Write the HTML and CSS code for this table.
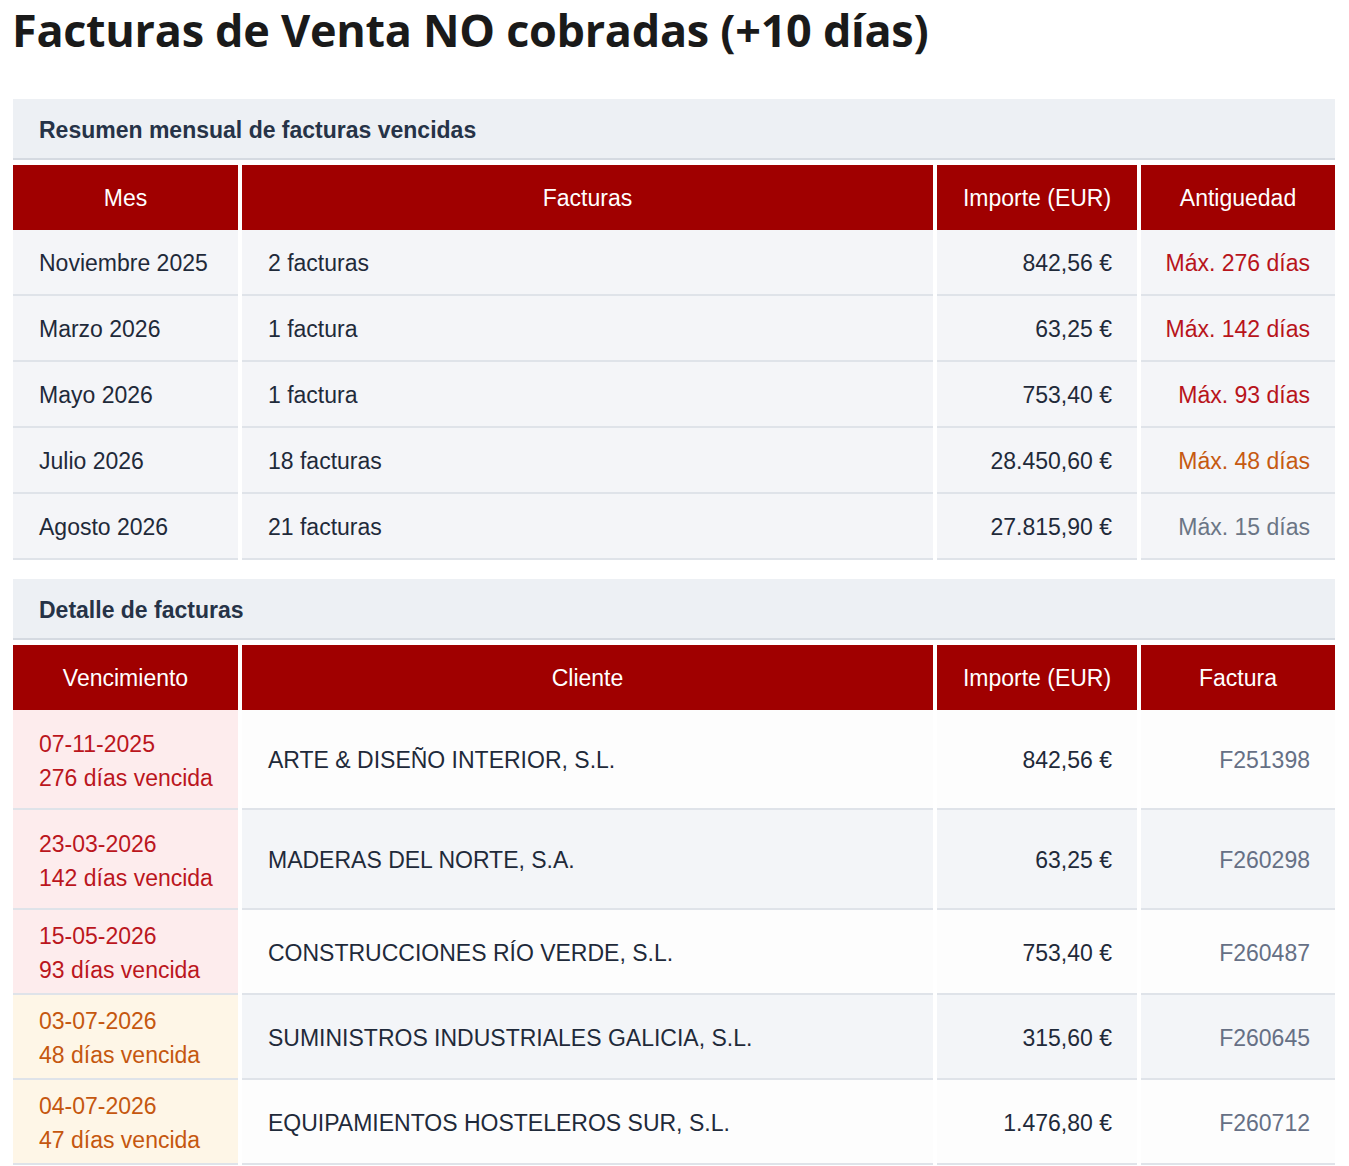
FILE: index.html
```html
<!DOCTYPE html>
<html lang="es">
<head>
<meta charset="utf-8">
<title>Facturas de Venta NO cobradas</title>
<link rel="stylesheet" href="styles.css">
</head>
<body>
<h1 class="page-title">Facturas de Venta NO cobradas (+10 días)</h1>

<section class="block">
  <h2 class="block-title">Resumen mensual de facturas vencidas</h2>
  <table class="grid summary">
    <colgroup>
      <col class="c1"><col class="c2"><col class="c3"><col class="c4">
    </colgroup>
    <thead>
      <tr><th>Mes</th><th>Facturas</th><th>Importe (EUR)</th><th>Antiguedad</th></tr>
    </thead>
    <tbody>
      <tr><td>Noviembre 2025</td><td>2 facturas</td><td class="num">842,56 €</td><td class="num age-red">Máx. 276 días</td></tr>
      <tr><td>Marzo 2026</td><td>1 factura</td><td class="num">63,25 €</td><td class="num age-red">Máx. 142 días</td></tr>
      <tr><td>Mayo 2026</td><td>1 factura</td><td class="num">753,40 €</td><td class="num age-red">Máx. 93 días</td></tr>
      <tr><td>Julio 2026</td><td>18 facturas</td><td class="num">28.450,60 €</td><td class="num age-orange">Máx. 48 días</td></tr>
      <tr><td>Agosto 2026</td><td>21 facturas</td><td class="num">27.815,90 €</td><td class="num age-gray">Máx. 15 días</td></tr>
    </tbody>
  </table>
</section>

<section class="block">
  <h2 class="block-title">Detalle de facturas</h2>
  <table class="grid detail">
    <colgroup>
      <col class="c1"><col class="c2"><col class="c3"><col class="c4">
    </colgroup>
    <thead>
      <tr><th>Vencimiento</th><th>Cliente</th><th>Importe (EUR)</th><th>Factura</th></tr>
    </thead>
    <tbody>
      <tr class="tall"><td class="due due-red">07-11-2025<br>276 días vencida</td><td>ARTE &amp; DISEÑO INTERIOR, S.L.</td><td class="num">842,56 €</td><td class="num inv">F251398</td></tr>
      <tr class="tall alt"><td class="due due-red">23-03-2026<br>142 días vencida</td><td>MADERAS DEL NORTE, S.A.</td><td class="num">63,25 €</td><td class="num inv">F260298</td></tr>
      <tr><td class="due due-red">15-05-2026<br>93 días vencida</td><td>CONSTRUCCIONES RÍO VERDE, S.L.</td><td class="num">753,40 €</td><td class="num inv">F260487</td></tr>
      <tr class="alt"><td class="due due-orange">03-07-2026<br>48 días vencida</td><td>SUMINISTROS INDUSTRIALES GALICIA, S.L.</td><td class="num">315,60 €</td><td class="num inv">F260645</td></tr>
      <tr><td class="due due-orange">04-07-2026<br>47 días vencida</td><td>EQUIPAMIENTOS HOSTELEROS SUR, S.L.</td><td class="num">1.476,80 €</td><td class="num inv">F260712</td></tr>
    </tbody>
  </table>
</section>
</body>
</html>
```

FILE: styles.css
```css
html, body {
  margin: 0;
  padding: 0;
  background: #ffffff;
}

body {
  padding: 0 14px 0 13px;
  font-family: "Liberation Sans", Arial, sans-serif;
  color: #1f2a3a;
}

.page-title {
  margin: 0 0 0 -1px;
  padding-top: 0;
  font-family: "Open Sans", "Liberation Sans", sans-serif;
  font-weight: 700;
  font-size: 45px;
  line-height: 60px;
  color: #1a1a1a;
  letter-spacing: -0.3px;
}

.block {
  margin-top: 39px;
}

.block + .block {
  margin-top: 19px;
}

.block-title {
  margin: 0;
  height: 61px;
  display: flex;
  align-items: center;
  padding: 3px 0 0 26px;
  box-sizing: border-box;
  background: #edf0f4;
  border-bottom: 2px solid #d5dae1;
  font-size: 23px;
  font-weight: 700;
  color: #263347;
}

.grid {
  border-collapse: separate;
  border-spacing: 4px 0;
  margin: 5px -4px 0;
  width: calc(100% + 8px);
  table-layout: fixed;
  font-size: 23px;
}

.c1 { width: 225px; }
.c2 { width: auto; }
.c3 { width: 200px; }
.c4 { width: 194px; }

.grid th {
  background: #a00000;
  color: #ffffff;
  font-weight: 400;
  height: 63px;
  padding: 2px 0 0;
  text-align: center;
  vertical-align: middle;
}

.grid td {
  padding: 3px 26px 0;
  border-bottom: 2px solid #dfe3e9;
  vertical-align: middle;
  color: #1f2a3a;
  white-space: nowrap;
}

.grid td.num {
  text-align: right;
  padding-left: 20px;
  padding-right: 25px;
}

.summary td {
  height: 61px;
  background: #f4f5f8;
}

.detail td {
  height: 80px;
  background: #fdfdfd;
}

.detail tr.tall td {
  height: 95px;
}

.detail tr.alt td {
  background: #f3f5f8;
}

.grid td.age-red { color: #b8141b; }
.grid td.age-orange { color: #c65a12; }
.grid td.age-gray { color: #6b7585; }

.grid td.inv { color: #667085; }

.grid td.due {
  line-height: 34px;
}

.detail tr td.due-red {
  background: #fdeced;
  color: #bb161d;
}

.detail tr td.due-orange {
  background: #fef6e7;
  color: #c5570f;
}
```
